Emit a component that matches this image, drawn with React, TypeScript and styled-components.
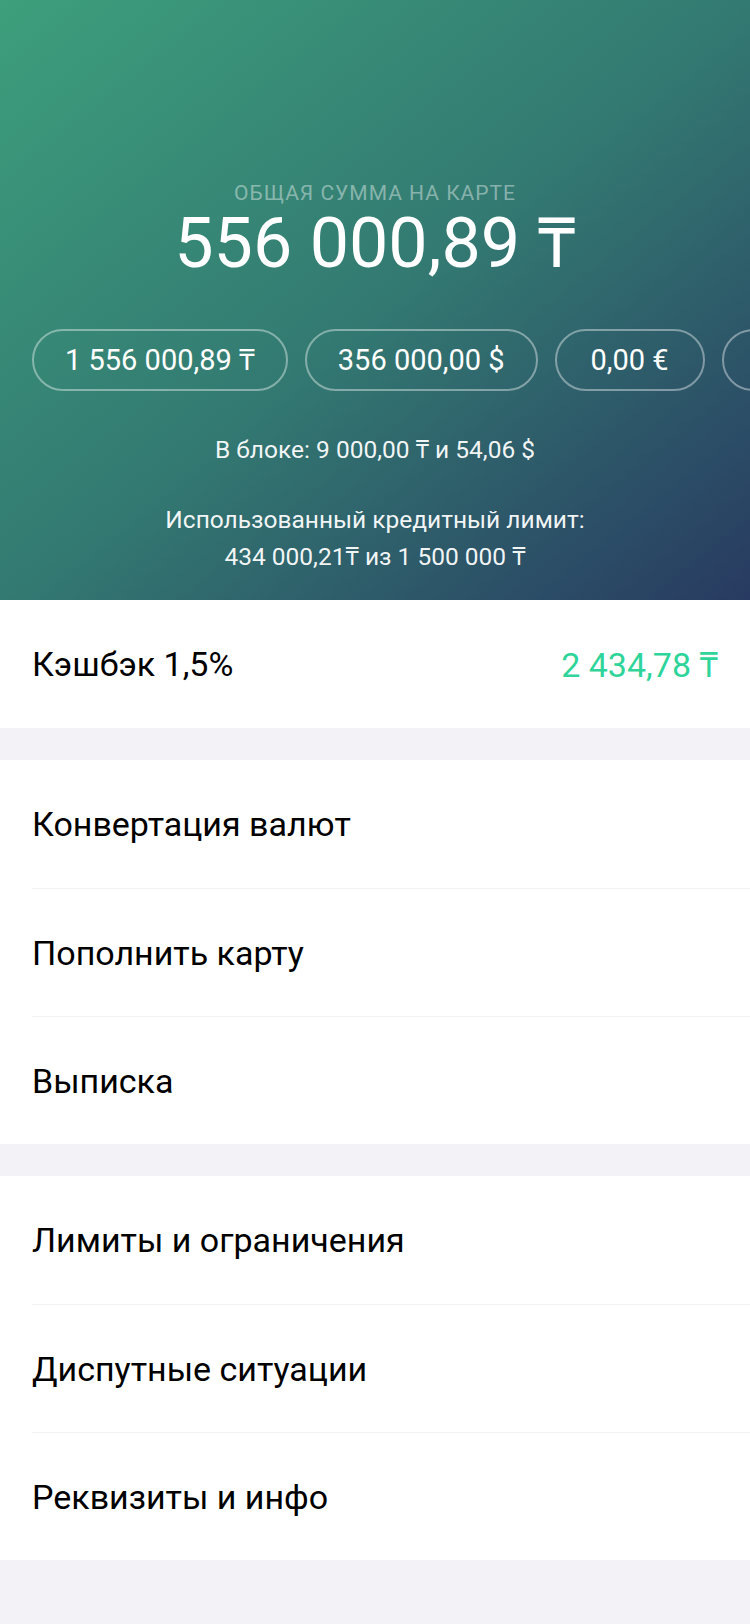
import styled, { createGlobalStyle } from "styled-components";

const GlobalStyle = createGlobalStyle`
  html, body {
    margin: 0;
    padding: 0;
    background: #f2f2f7;
  }
  body {
    font-family: Roboto, "Noto Sans", "DejaVu Sans", sans-serif;
    -webkit-font-smoothing: antialiased;
  }
  * {
    box-sizing: border-box;
  }
`;

const Page = styled.div`
  width: 750px;
  min-height: 1624px;
  background: #f2f2f7;
  overflow: hidden;
`;

const Header = styled.header`
  height: 600px;
  padding-top: 181px;
  display: flex;
  flex-direction: column;
  align-items: center;
  color: #fff;
  background: linear-gradient(
    to bottom right,
    #3d9f7c 0%,
    #337a72 50%,
    #283a61 100%
  );
`;

const Caption = styled.div`
  font-size: 21px;
  line-height: 24px;
  letter-spacing: 1px;
  text-transform: uppercase;
  color: rgba(255, 255, 255, 0.42);
`;

const Total = styled.div`
  margin-top: 2px;
  font-size: 70px;
  line-height: 72px;
`;

const Pills = styled.div`
  align-self: stretch;
  margin-top: 50px;
  padding-left: 32px;
  display: flex;
  gap: 17px;
  overflow: hidden;
`;

const Pill = styled.div`
  flex: none;
  min-width: 150px;
  height: 62px;
  padding: 0 31px;
  border: 2px solid rgba(255, 255, 255, 0.4);
  border-radius: 31px;
  font-size: 29px;
  line-height: 58px;
  text-align: center;
  white-space: nowrap;
`;

const Note = styled.div<{ $gap: number }>`
  margin-top: ${(p) => p.$gap}px;
  font-size: 24.5px;
  line-height: 37px;
  text-align: center;
  color: rgba(255, 255, 255, 0.95);
`;

const Section = styled.section`
  margin-bottom: 32px;
  background: #fff;
`;

const Row = styled.div`
  height: 128px;
  margin-left: 32px;
  padding-right: 32px;
  display: flex;
  align-items: center;
  justify-content: space-between;
  border-top: 1px solid #f2f2f5;
  font-size: 34px;
  color: #000;

  &:first-child {
    border-top: none;
  }
`;

const Value = styled.span`
  color: #2fd49a;
`;

const balances = ["1 556 000,89 ₸", "356 000,00 $", "0,00 €", "0,00 ₽"];

const groups = [
  ["Конвертация валют", "Пополнить карту", "Выписка"],
  ["Лимиты и ограничения", "Диспутные ситуации", "Реквизиты и инфо"],
];

export default function App() {
  return (
    <Page>
      <GlobalStyle />
      <Header>
        <Caption>Общая сумма на карте</Caption>
        <Total>556 000,89 ₸</Total>
        <Pills>
          {balances.map((b) => (
            <Pill key={b}>{b}</Pill>
          ))}
        </Pills>
        <Note $gap={40}>В блоке: 9 000,00 ₸ и 54,06 $</Note>
        <Note $gap={33}>
          Использованный кредитный лимит:
          <br />
          434 000,21₸ из 1 500 000 ₸
        </Note>
      </Header>

      <Section>
        <Row>
          <span>Кэшбэк 1,5%</span>
          <Value>2 434,78 ₸</Value>
        </Row>
      </Section>

      {groups.map((items, i) => (
        <Section key={i}>
          {items.map((item) => (
            <Row key={item}>{item}</Row>
          ))}
        </Section>
      ))}
    </Page>
  );
}
